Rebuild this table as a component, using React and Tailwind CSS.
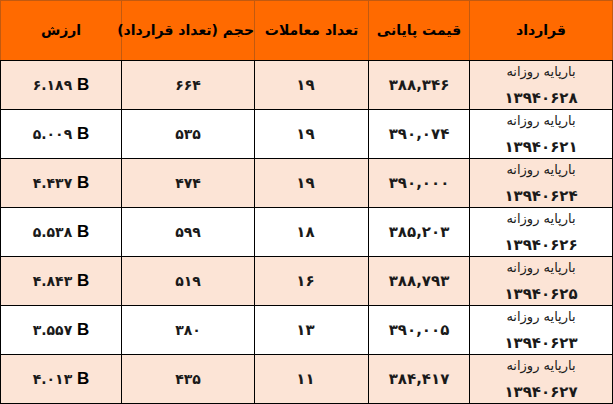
import React from "react";

const rows = [
  { value: "۶.۱۸۹", volume: "۶۶۴", count: "۱۹", price: "۳۸۸,۳۴۶", date: "۱۳۹۴۰۶۲۸", shade: true },
  { value: "۵.۰۰۹", volume: "۵۳۵", count: "۱۹", price: "۳۹۰,۰۷۴", date: "۱۳۹۴۰۶۲۱", shade: false },
  { value: "۴.۴۳۷", volume: "۴۷۴", count: "۱۹", price: "۳۹۰,۰۰۰", date: "۱۳۹۴۰۶۲۴", shade: true },
  { value: "۵.۵۳۸", volume: "۵۹۹", count: "۱۸", price: "۳۸۵,۲۰۳", date: "۱۳۹۴۰۶۲۶", shade: false },
  { value: "۴.۸۴۳", volume: "۵۱۹", count: "۱۶", price: "۳۸۸,۷۹۳", date: "۱۳۹۴۰۶۲۵", shade: true },
  { value: "۳.۵۵۷", volume: "۳۸۰", count: "۱۳", price: "۳۹۰,۰۰۵", date: "۱۳۹۴۰۶۲۳", shade: false },
  { value: "۴.۰۱۳", volume: "۴۳۵", count: "۱۱", price: "۳۸۴,۴۱۷", date: "۱۳۹۴۰۶۲۷", shade: true },
];

const headers = ["قرارداد", "قیمت پایانی", "تعداد معاملات", "حجم (تعداد قرارداد)", "ارزش"];
const widths = ["w-[143px]", "w-[101px]", "w-[114px]", "w-[133px]", "w-[121px]"];

const fa = { fontFamily: '"DejaVu Sans", "Noto Sans", sans-serif' };

export default function App() {
  return (
    <div className="w-[613px] h-[404px] bg-white" dir="rtl" style={fa}>
      <table className="w-[612px] border-collapse table-fixed">
        <thead>
          <tr className="h-[60px] bg-[#ff6a00]">
            {headers.map((h, i) => (
              <th
                key={h}
                className={`${widths[i]} border border-[#c25a10] border-b-black p-0 whitespace-nowrap text-center text-[14px] font-bold text-black tracking-tight`}
              >
                {h}
              </th>
            ))}
          </tr>
        </thead>
        <tbody>
          {rows.map((r) => (
            <tr key={r.date} className={`h-[49px] ${r.shade ? "bg-[#fce4d6]" : "bg-white"}`}>
              <td className="border border-black p-0 text-center align-top overflow-hidden">
                <div className="h-[48px] overflow-hidden text-[13px] text-[#1a1a1a]">
                  <div className="leading-[22px]">بارپایه روزانه</div>
                  <div className="font-bold text-[15px] leading-[30px]">{r.date}</div>
                </div>
              </td>
              <td className="border border-black text-center text-[15px] font-bold text-[#1a1a1a]" dir="ltr">
                {r.price}
              </td>
              <td className="border border-black text-center pr-[12px] text-[15px] font-bold text-[#1a1a1a]" dir="ltr">
                {r.count}
              </td>
              <td className="border border-black text-center text-[14px] font-bold text-[#1a1a1a]" dir="ltr">
                {r.volume}
              </td>
              <td className="border border-black text-center font-bold text-[#1a1a1a]" dir="ltr">
                <span className="text-[14px]">{r.value} </span>
                <span className="text-[17px] text-black" style={{ fontFamily: '"Liberation Sans", Arial, sans-serif' }}>
                  B
                </span>
              </td>
            </tr>
          ))}
        </tbody>
      </table>
    </div>
  );
}
